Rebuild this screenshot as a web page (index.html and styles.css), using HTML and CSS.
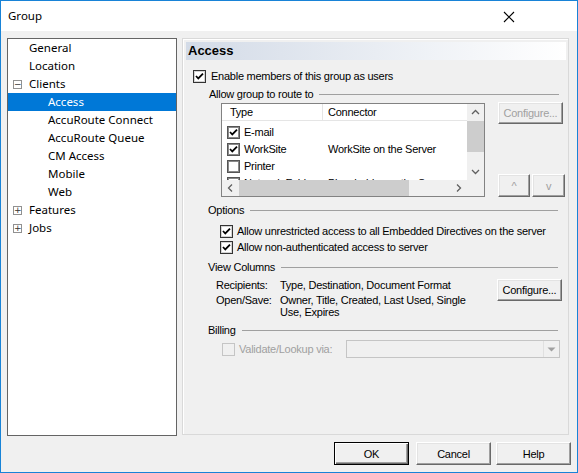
FILE: index.html
```html
<!DOCTYPE html>
<html lang="en">
<head>
  <meta charset="UTF-8" />
  <title>Group</title>
  <link rel="stylesheet" href="styles.css">
</head>
<body>

<div class="window">
  <div class="titlebar">
    <span class="title">Group</span>
    <svg class="close" width="12" height="12" viewBox="0 0 12 12">
      <path d="M1 1 L11 11 M11 1 L1 11" stroke="#000" stroke-width="1.1" fill="none"/>
    </svg>
  </div>

  <div class="client">
    <div class="main">

      <!-- tree -->
      <div class="tree">
        <div class="node">General</div>
        <div class="node">Location</div>
        <div class="node"><span class="exp">&minus;</span>Clients</div>
        <div class="node child selected">Access</div>
        <div class="node child">AccuRoute Connect</div>
        <div class="node child">AccuRoute Queue</div>
        <div class="node child">CM Access</div>
        <div class="node child">Mobile</div>
        <div class="node child">Web</div>
        <div class="node"><span class="exp">+</span>Features</div>
        <div class="node"><span class="exp">+</span>Jobs</div>
      </div>

      <!-- page -->
      <div class="panel">
        <div class="panel-head">Access</div>
        <div class="panel-body">

          <label class="check-row enable">
            <span class="box checked"></span>Enable members of this group as users
          </label>

          <div class="group-label route-label"><span>Allow group to route to</span></div>

          <div class="route">
            <div class="list">
              <div class="list-view">
                <div class="list-head">
                  <div class="col-type">Type</div>
                  <div class="col-conn">Connector</div>
                </div>
                <div class="list-rows">
                  <div class="list-row"><div class="col-type"><span class="box small checked"></span>E-mail</div><div class="col-conn"></div></div>
                  <div class="list-row"><div class="col-type"><span class="box small checked"></span>WorkSite</div><div class="col-conn">WorkSite on the Server</div></div>
                  <div class="list-row"><div class="col-type"><span class="box small"></span>Printer</div><div class="col-conn"></div></div>
                  <div class="list-row"><div class="col-type"><span class="box small"></span>Network Folder</div><div class="col-conn">Placeholder on the Server</div></div>
                </div>
              </div>
              <div class="vscroll">
                <svg width="17" height="17" viewBox="0 0 17 17"><path d="M5 10 L8.5 6.5 L12 10" stroke="#606060" stroke-width="1.3" fill="none"/></svg>
                <div class="vtrack"><div class="vthumb"></div></div>
                <svg width="17" height="17" viewBox="0 0 17 17"><path d="M5 7 L8.5 10.5 L12 7" stroke="#606060" stroke-width="1.3" fill="none"/></svg>
              </div>
              <div class="hscroll">
                <svg width="17" height="16" viewBox="0 0 17 16"><path d="M10 4.5 L6.5 8 L10 11.5" stroke="#606060" stroke-width="1.3" fill="none"/></svg>
                <div class="htrack"><div class="hthumb"></div></div>
                <svg width="17" height="16" viewBox="0 0 17 16"><path d="M7 4.5 L10.5 8 L7 11.5" stroke="#606060" stroke-width="1.3" fill="none"/></svg>
              </div>
              <div class="corner"></div>
            </div>

            <div class="side">
              <button class="btn disabled wide">Configure...</button>
              <div class="updown">
                <button class="btn disabled up">^</button>
                <button class="btn disabled down">v</button>
              </div>
            </div>
          </div>

          <div class="group-label options-label"><span>Options</span></div>
          <label class="check-row option first">
            <span class="box checked"></span>Allow unrestricted access to all Embedded Directives on the server
          </label>
          <label class="check-row option">
            <span class="box checked"></span>Allow non-authenticated access to server
          </label>

          <div class="group-label columns-label"><span>View Columns</span></div>
          <div class="columns">
            <div class="col-info">
              <div class="col-line recipients">
                <span class="col-name">Recipients:</span>
                <span class="col-value">Type, Destination, Document Format</span>
              </div>
              <div class="col-line opensave">
                <span class="col-name">Open/Save:</span>
                <span class="col-value">Owner, Title, Created, Last Used, Single Use, Expires</span>
              </div>
            </div>
            <button class="btn wide columns-btn">Configure...</button>
          </div>

          <div class="group-label billing-label"><span>Billing</span></div>
          <div class="billing">
            <label class="check-row disabled-check">
              <span class="box off"></span>Validate/Lookup via:
            </label>
            <div class="combo">
              <div class="combo-drop">
                <svg width="9" height="5" viewBox="0 0 9 5"><path d="M0.5 0.5 L8.5 0.5 L4.5 4.5 Z" fill="#a0a0a0"/></svg>
              </div>
            </div>
          </div>

        </div>
      </div>
    </div>

    <div class="buttons">
      <button class="btn dialog default">OK</button>
      <button class="btn dialog cancel">Cancel</button>
      <button class="btn dialog help">Help</button>
    </div>
  </div>
</div>

</body>
</html>
```

FILE: styles.css
```css
html, body {
  margin: 0;
  padding: 0;
}

body {
  width: 578px;
  height: 473px;
  overflow: hidden;
  font-family: 'Liberation Sans', Arial, sans-serif;
  font-size: 11px;
  letter-spacing: -0.25px;
  color: #000;
}

.window {
  box-sizing: border-box;
  width: 578px;
  height: 473px;
  border: 1px solid #1883d7;
  background-color: #f0f0f0;
  display: flex;
  flex-direction: column;
}

/* title bar */
.titlebar {
  height: 30px;
  background-color: #fff;
  display: flex;
  align-items: center;
  justify-content: space-between;
  padding: 0 62px 0 7px;
}

.title {
  font-family: 'Noto Sans', sans-serif;
  font-size: 11.5px;
  letter-spacing: 0;
  margin-top: -1px;
}

.close {
  margin-top: 1px;
}

.client {
  flex: 1;
  padding: 7px 6px 0 6px;
}

.main {
  display: flex;
  gap: 5px;
}

/* tree */
.tree {
  box-sizing: border-box;
  width: 170px;
  height: 398px;
  border: 1px solid #646464;
  background-color: #fff;
  font-family: 'Noto Sans', sans-serif;
  font-size: 11.5px;
  letter-spacing: 0;
}

.node {
  height: 18px;
  line-height: 18px;
  padding-left: 21px;
  position: relative;
  white-space: nowrap;
}

.node.child {
  padding-left: 40px;
}

.node.selected {
  background-color: #0078d7;
  color: #fff;
}

.exp {
  position: absolute;
  left: 5px;
  top: 5px;
  box-sizing: border-box;
  width: 9px;
  height: 9px;
  border: 1px solid #919191;
  font-family: 'DejaVu Sans', sans-serif;
  font-size: 9px;
  line-height: 6px;
  text-align: center;
  color: #333;
}

/* property page */
.panel {
  box-sizing: border-box;
  width: 387px;
  height: 397px;
  border: 1px solid #d9d9d9;
  box-shadow: inset 1px 1px #fff;
  padding: 3px 2px 0 3px;
}

.panel-head {
  height: 18px;
  line-height: 18px;
  padding-left: 2px;
  font-size: 13px;
  font-weight: bold;
  letter-spacing: 0;
  background: linear-gradient(to right, #d3dbe7, #ffffff);
}

.panel-body {
  padding-left: 7px;
}

.check-row {
  display: flex;
  align-items: center;
  gap: 5px;
  height: 16px;
  white-space: nowrap;
}

.box {
  box-sizing: border-box;
  width: 13px;
  height: 13px;
  border: 1px solid #333;
  box-shadow: inset 0 0 0 1px #d4d4d4;
  background-color: #fff;
  flex-shrink: 0;
}

.box.checked {
  background: #fff url("data:image/svg+xml;utf8,<svg xmlns='http://www.w3.org/2000/svg' width='11' height='11'><path d='M2 5 L4.3 7.5 L9 2.7' stroke='black' stroke-width='1.8' fill='none'/></svg>") center no-repeat;
}

.box.small {
  box-shadow: inset 0 0 0 1px #8a8a8a;
  border-color: #555;
}

.box.off {
  border-color: #c5c5c5;
  box-shadow: none;
  background-color: #f0f0f0;
}

.enable {
  margin-top: 8px;
}

.group-label {
  display: flex;
  align-items: center;
  height: 14px;
  margin-left: 15px;
  width: 350px;
  white-space: nowrap;
}

.group-label::after {
  content: "";
  flex: 1;
  margin-left: 6px;
  border-top: 1px solid #a0a0a0;
}

.route-label {
  margin-left: 16px;
  margin-top: 3px;
}

/* route list */
.route {
  display: flex;
  height: 95px;
  margin-top: 1px;
}

.list {
  box-sizing: border-box;
  width: 264px;
  height: 94px;
  margin-top: 1px;
  margin-left: 28px;
  border: 1px solid #828282;
  background-color: #fff;
  display: grid;
  grid-template-columns: 1fr 17px;
  grid-template-rows: 1fr 16px;
}

.list-view {
  overflow: hidden;
}

.list-head {
  display: flex;
  height: 17px;
  line-height: 16px;
  border-bottom: 1px solid #e5e5e5;
  box-sizing: border-box;
}

.list-head .col-type {
  padding-left: 8px;
  border-right: 1px solid #e5e5e5;
}

.col-type {
  box-sizing: border-box;
  width: 101px;
  display: flex;
  align-items: center;
  gap: 4px;
  padding-left: 5px;
  white-space: nowrap;
}

.col-conn {
  padding-left: 5px;
  white-space: nowrap;
}

.list-rows {
  padding-top: 3px;
}

.list-row {
  display: flex;
  height: 17px;
  line-height: 17px;
}

.vscroll {
  background-color: #f0f0f0;
  display: flex;
  flex-direction: column;
}

.vtrack {
  flex: 1;
}

.vthumb {
  height: 31px;
  background-color: #cdcdcd;
}

.hscroll {
  background-color: #f0f0f0;
  display: flex;
}

.htrack {
  flex: 1;
}

.hthumb {
  width: 170px;
  height: 16px;
  background-color: #cdcdcd;
}

.corner {
  background-color: #f0f0f0;
}

.side {
  display: flex;
  flex-direction: column;
  justify-content: space-between;
  margin-left: 13px;
}

.updown {
  display: flex;
  gap: 2px;
}

/* buttons */
.btn {
  box-sizing: border-box;
  height: 23px;
  padding: 0;
  font-family: 'Liberation Sans', Arial, sans-serif;
  font-size: 11px;
  letter-spacing: -0.25px;
  color: #000;
  background-color: #f0f0f0;
  border: 1px solid;
  border-color: #fff #696969 #696969 #fff;
  box-shadow: inset -1px -1px #a0a0a0, inset 1px 1px #e3e3e3;
}

.btn.disabled {
  color: #a0a0a0;
}

.btn.wide {
  width: 65px;
  height: 22px;
}

.btn.up {
  width: 32px;
}

.btn.down {
  width: 33px;
}

.options-label {
  margin-top: 6px;
}

.option {
  margin-left: 27px;
  gap: 4px;
}

.option.first {
  margin-top: 6px;
}

.columns-label {
  margin-top: 5px;
}

.columns {
  display: flex;
  margin-top: 3px;
}

.col-info {
  margin-left: 23px;
  width: 256px;
}

.col-line {
  display: flex;
}

.recipients {
  height: 16px;
  line-height: 16px;
  white-space: nowrap;
}

.opensave {
  line-height: 12px;
  margin-top: 1px;
}

.col-name {
  width: 64px;
  flex-shrink: 0;
}

.columns-btn {
  margin-left: 25px;
  margin-top: 2px;
}

.billing-label {
  margin-top: 5px;
}

.billing {
  display: flex;
  align-items: center;
  margin-top: 3px;
  height: 18px;
}

.disabled-check {
  width: 124px;
  margin-left: 29px;
  gap: 4px;
  color: #a0a0a0;
}

.combo {
  box-sizing: border-box;
  width: 214px;
  height: 18px;
  border: 1px solid #c5c5c5;
  background-color: #f0f0f0;
  display: flex;
  justify-content: flex-end;
}

.combo-drop {
  width: 15px;
  display: flex;
  align-items: center;
  justify-content: center;
  border-left: 1px solid #e0e0e0;
}

.buttons {
  display: flex;
  justify-content: flex-end;
  margin-top: 6px;
}

.btn.dialog {
  width: 75px;
}

.btn.default {
  border: 1px solid #000;
  box-shadow: inset 1px 1px #fff, inset -1px -1px #696969, inset -2px -2px #a0a0a0;
}

.btn.cancel {
  margin-left: 7px;
}

.btn.help {
  margin-left: 5px;
}
```
